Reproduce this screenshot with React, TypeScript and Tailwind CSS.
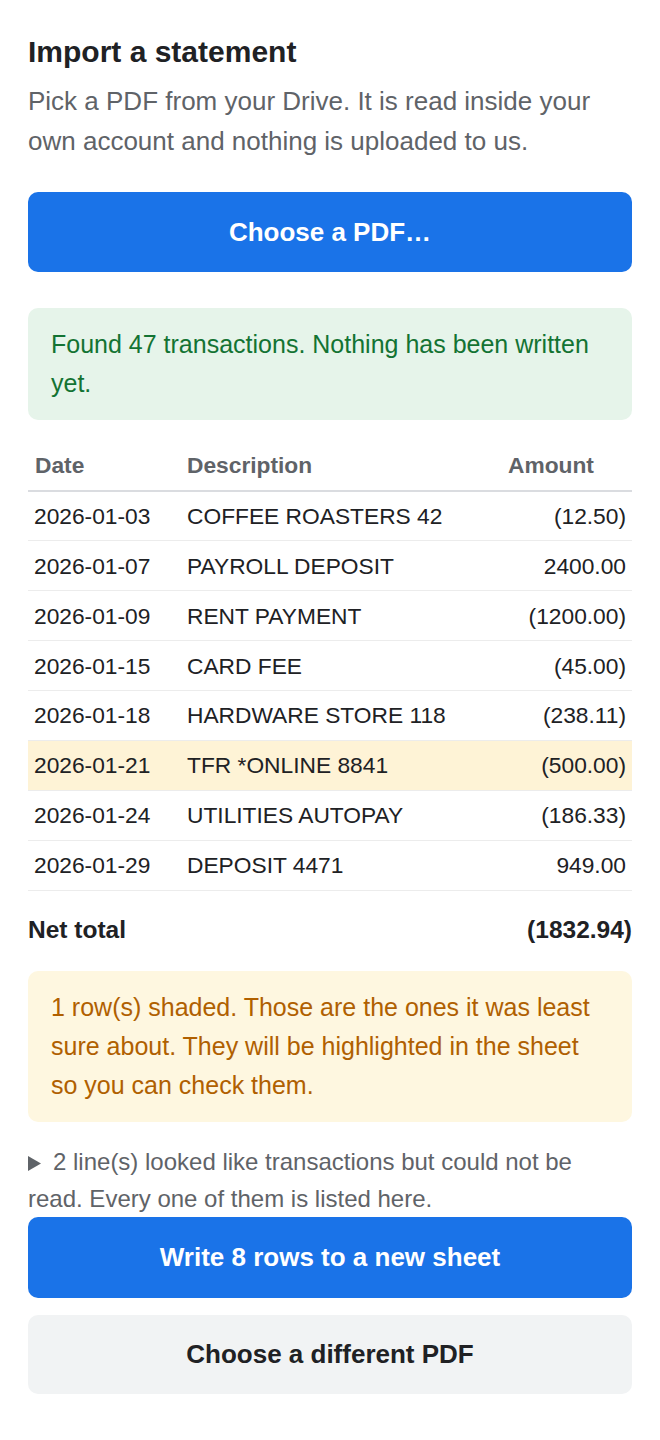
import React from "react";

const rows: { date: string; desc: string; amt: string; flag?: boolean }[] = [
  { date: "2026-01-03", desc: "COFFEE ROASTERS 42", amt: "(12.50)" },
  { date: "2026-01-07", desc: "PAYROLL DEPOSIT", amt: "2400.00" },
  { date: "2026-01-09", desc: "RENT PAYMENT", amt: "(1200.00)" },
  { date: "2026-01-15", desc: "CARD FEE", amt: "(45.00)" },
  { date: "2026-01-18", desc: "HARDWARE STORE 118", amt: "(238.11)" },
  { date: "2026-01-21", desc: "TFR *ONLINE 8841", amt: "(500.00)", flag: true },
  { date: "2026-01-24", desc: "UTILITIES AUTOPAY", amt: "(186.33)" },
  { date: "2026-01-29", desc: "DEPOSIT 4471", amt: "949.00" },
];

export default function App() {
  return (
    <div
      className="min-h-[1440px] bg-white px-[28px] pt-[34px] text-[#202124]"
      style={{ fontFamily: '"Liberation Sans", Arial, sans-serif' }}
    >
      <h1 className="text-[30px] font-bold leading-[36px]">Import a statement</h1>
      <p className="mt-[11px] text-[26px] leading-[40px] text-[#5f6368]">
        Pick a PDF from your Drive. It is read inside your own account and nothing is uploaded to us.
      </p>

      <button className="mt-[31px] flex h-[80px] w-full items-center justify-center rounded-[10px] bg-[#1a73e8] text-[26px] font-bold text-white">
        Choose a PDF…
      </button>

      <div className="mt-[36px] rounded-[10px] bg-[#e6f4ea] px-[23px] py-[17px] text-[25px] leading-[39px] text-[#137333]">
        Found 47 transactions. Nothing has been written yet.
      </div>

      <table className="mt-[20px] w-full border-collapse text-[22.75px]">
        <thead>
          <tr className="border-b-2 border-[#dadce0]">
            <th className="h-[51px] w-[152px] px-[7px] text-left font-bold text-[#5f6368]">Date</th>
            <th className="h-[51px] px-[7px] text-left font-bold text-[#5f6368]">Description</th>
            <th className="h-[51px] w-[131px] px-[7px] text-left font-bold text-[#5f6368]">Amount</th>
          </tr>
        </thead>
        <tbody>
          {rows.map((r) => (
            <tr key={r.date} className={"border-b border-[#ececec] " + (r.flag ? "bg-[#fef3d6]" : "")}>
              <td className="h-[49.9px] px-[6px]">{r.date}</td>
              <td className="h-[49.9px] px-[7px]">{r.desc}</td>
              <td className="h-[49.9px] px-[6px] text-right">{r.amt}</td>
            </tr>
          ))}
        </tbody>
      </table>

      <div className="mt-[20px] flex items-center justify-between text-[24.5px] font-bold leading-[37px]">
        <span>Net total</span>
        <span>(1832.94)</span>
      </div>

      <div className="mt-[23px] rounded-[10px] bg-[#fef7e0] px-[23px] py-[17px] text-[25px] leading-[39px] text-[#b06000]">
        1 row(s) shaded. Those are the ones it was least sure about. They will be highlighted in the sheet so
        you can check them.
      </div>

      <div className="mt-[21px] text-[24px] leading-[37px] text-[#5f6368]">
        <svg
          className="mr-[12px] inline-block align-[-1px]"
          width="13"
          height="15"
          viewBox="0 0 13 15"
          aria-hidden="true"
        >
          <path d="M0 0 L13 7.5 L0 15 Z" fill="#5f6368" />
        </svg>
        2 line(s) looked like transactions but could not be read. Every one of them is listed here.
      </div>

      <button className="flex h-[81px] w-full items-center justify-center rounded-[10px] bg-[#1a73e8] text-[26px] font-bold text-white">
        Write 8 rows to a new sheet
      </button>
      <button className="mt-[17px] flex h-[79px] w-full items-center justify-center rounded-[10px] bg-[#f1f3f4] text-[26px] font-bold text-[#202124]">
        Choose a different PDF
      </button>
    </div>
  );
}
